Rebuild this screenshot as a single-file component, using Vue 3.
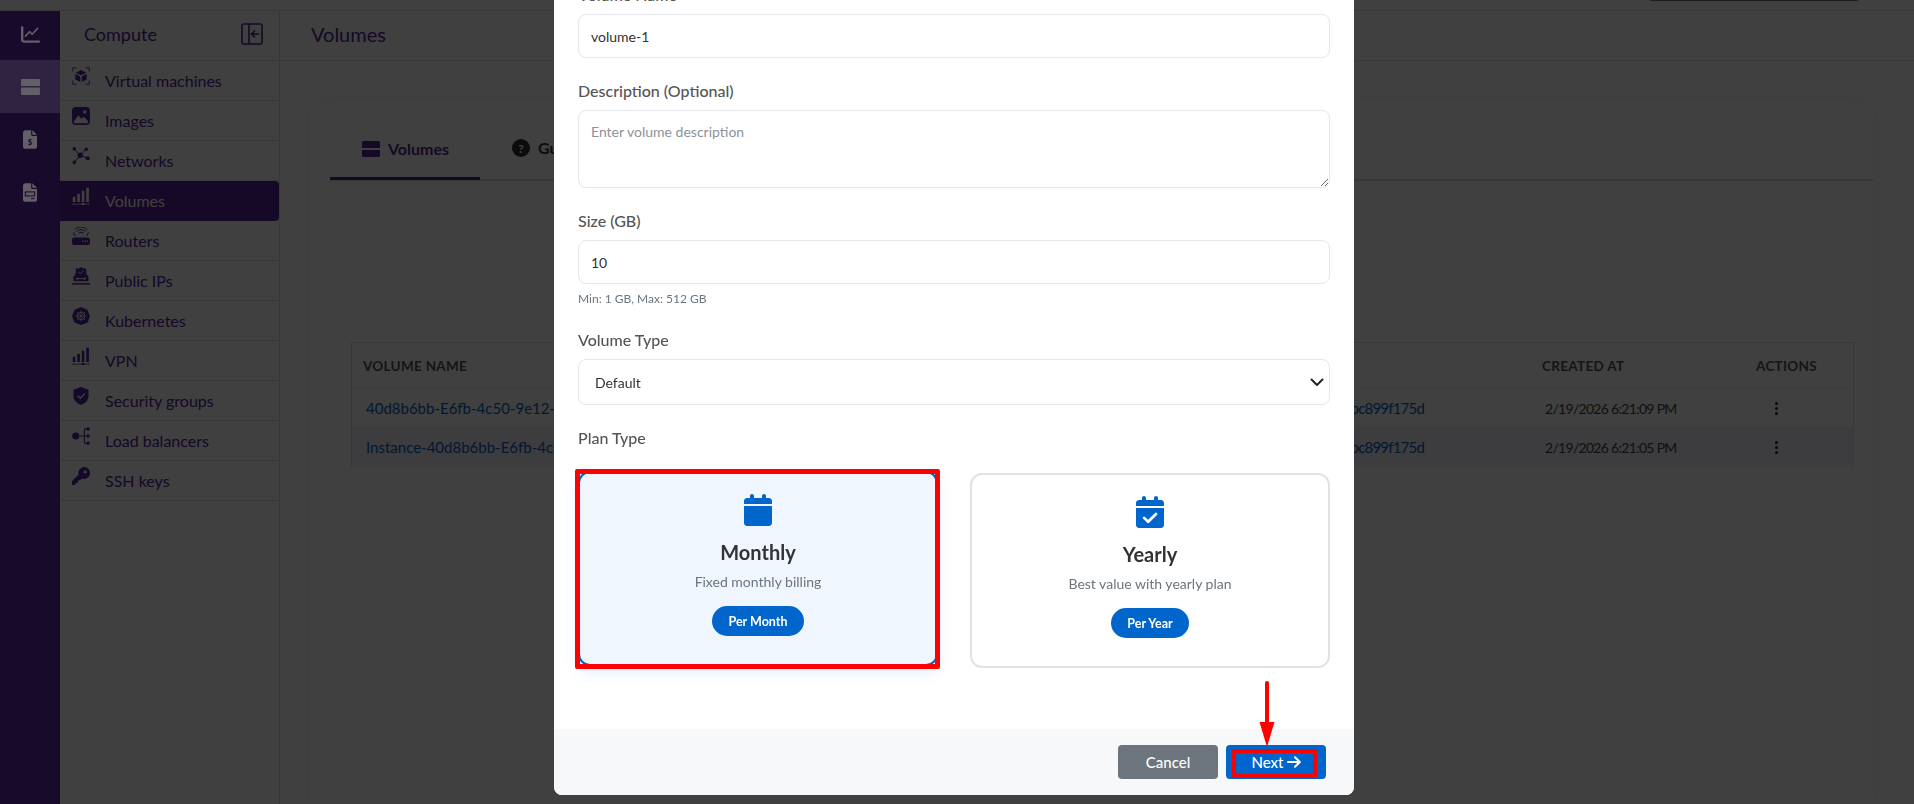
<template>
  <div class="page">
    <div class="topbar"><span class="top-tool"></span></div>

    <div class="shell">
      <aside class="rail">
        <div class="rail-item first">
          <svg viewBox="0 0 512 512" width="19" height="19" fill="currentColor"><path d="M64 64c0-17.7-14.3-32-32-32S0 46.300 0 64V400c0 44.200 35.800 80 80 80H480c17.700 0 32-14.300 32-32s-14.300-32-32-32H80c-8.800 0-16-7.200-16-16V64z"/><path d="M120 300l110-120 70 70L450 90" fill="none" stroke="currentColor" stroke-width="44" stroke-linecap="round" stroke-linejoin="round"/></svg>
        </div>
        <div class="rail-item active">
          <svg viewBox="0 0 18 18" width="19" height="19" fill="currentColor"><path d="M1 2h16a1 1 0 0 1 1 1v5.500H0V3a1 1 0 0 1 1-1zm0 8h16a1 1 0 0 1 1 1v5a1 1 0 0 1-1 1H1a1 1 0 0 1-1-1v-5a1 1 0 0 1 1-1z"/></svg>
        </div>
        <div class="rail-item">
          <svg viewBox="0 0 384 512" width="14" height="19" fill="currentColor"><path d="M64 0C28.700 0 0 28.700 0 64V448c0 35.300 28.700 64 64 64H320c35.300 0 64-28.700 64-64V160H256c-17.700 0-32-14.300-32-32V0H64zM256 0V128H384L256 0z"/><text x="192" y="400" text-anchor="middle" font-size="210" font-weight="700" font-family="Lato" fill="#170a2b">$</text></svg>
        </div>
        <div class="rail-item">
          <svg viewBox="0 0 384 512" width="14" height="19" fill="currentColor"><path d="M64 0C28.700 0 0 28.700 0 64V448c0 35.300 28.700 64 64 64H320c35.300 0 64-28.700 64-64V160H256c-17.700 0-32-14.300-32-32V0H64zM256 0V128H384L256 0z"/><rect x="64" y="240" width="256" height="110" fill="none" stroke="#170a2b" stroke-width="28"/><rect x="220" y="410" width="100" height="28" fill="#170a2b"/></svg>
        </div>
      </aside>

      <nav class="sidebar">
        <div class="side-head">
          <span>Compute</span>
          <svg viewBox="0 0 22 22" width="22" height="22" fill="none" stroke="currentColor" stroke-width="1.600"><rect x="1" y="1" width="20" height="20" rx="1.500"/><path d="M8 1v20M18 11h-7M14 7.500 10.500 11l3.500 3.500"/></svg>
        </div>
        <div v-for="item in navItems" :key="item.label" class="side-row" :class="{ current: item.label === 'Volumes' }">
          <svg class="side-icon" viewBox="0 0 24 24" width="18" height="18" fill="currentColor" v-html="icons[item.icon]"></svg>
          <span>{{ item.label }}</span>
        </div>
      </nav>

      <main class="main">
        <header class="main-head">Volumes</header>
        <div class="content">
          <section class="card">
            <div class="tabs">
              <div class="tab selected">
                <svg viewBox="0 0 18 18" width="18" height="18" fill="currentColor"><path d="M1.500 1h15A1.500 1.500 0 0 1 18 2.500V8H0V2.500A1.500 1.500 0 0 1 1.500 1zM0 10h18v5.500a1.500 1.500 0 0 1-1.500 1.500h-15A1.500 1.500 0 0 1 0 15.500z"/></svg>
                Volumes
              </div>
              <div class="tab">
                <svg viewBox="0 0 18 18" width="18" height="18"><circle cx="9" cy="9" r="9" fill="currentColor"/><text x="9" y="13.500" text-anchor="middle" font-size="12" font-weight="700" font-family="Lato" fill="#fff">?</text></svg>
                Guide
              </div>
            </div>

            <div class="table">
              <div class="tr th">
                <div>VOLUME NAME</div>
                <div class="id-head">ATTACHED TO</div>
                <div class="date-col">CREATED AT</div>
                <div>ACTIONS</div>
              </div>
              <div v-for="row in volumes" :key="row.name" class="tr" :class="{ tinted: row.tinted }">
                <div class="link name-col">{{ row.name }}</div>
                <div class="link id-col">{{ row.id }}</div>
                <div class="date-col date">{{ row.created }}</div>
                <div class="kebab"><i></i><i></i><i></i></div>
              </div>
            </div>
          </section>
        </div>
      </main>
    </div>

    <div class="backdrop"></div>

    <div class="modal-wrap">
      <div class="modal">
        <div class="modal-body">
          <label class="lbl">Volume Name</label>
          <input class="ctl" type="text" value="volume-1" />

          <label class="lbl">Description (Optional)</label>
          <textarea class="ctl area" placeholder="Enter volume description"></textarea>

          <label class="lbl">Size (GB)</label>
          <input class="ctl" type="text" value="10" />
          <div class="hint">Min: 1 GB, Max: 512 GB</div>

          <label class="lbl">Volume Type</label>
          <div class="select-box">
            <select class="ctl sel"><option>Default</option></select>
            <svg class="chev" viewBox="0 0 14 9" width="14" height="9" fill="none" stroke="#212529" stroke-width="2" stroke-linecap="round" stroke-linejoin="round"><path d="M1.500 1.500 7 7l5.500-5.500"/></svg>
          </div>

          <label class="lbl plan-lbl">Plan Type</label>
          <div class="plans">
            <div v-for="plan in plans" :key="plan.title" class="plan" :class="{ picked: plan.picked }">
              <svg class="plan-icon" viewBox="0 0 448 512" width="28" height="32" fill="#0066cc">
                <path d="M96 32V64H48C21.500 64 0 85.500 0 112v48H448V112c0-26.500-21.500-48-48-48H352V32c0-17.700-14.300-32-32-32s-32 14.300-32 32V64H160V32c0-17.700-14.300-32-32-32S96 14.300 96 32zM448 192H0V464c0 26.500 21.500 48 48 48H400c26.500 0 48-21.500 48-48V192z"/>
                <path v-if="!plan.picked" d="M130 350l65 62 125-125" fill="none" stroke="#fff" stroke-width="44" stroke-linecap="round" stroke-linejoin="round"/>
              </svg>
              <div class="plan-title">{{ plan.title }}</div>
              <div class="plan-sub">{{ plan.sub }}</div>
              <span class="pill">{{ plan.pill }}</span>
              <span v-if="plan.picked" class="mark mark-plan"></span>
            </div>
          </div>
        </div>

        <footer class="modal-foot">
          <button class="btn cancel">Cancel</button>
          <button class="btn next">
            Next
            <svg viewBox="0 0 14 12" width="14" height="12" fill="none" stroke="#fff" stroke-width="2" stroke-linecap="round" stroke-linejoin="round"><path d="M1 6h11.500M8 1.200 12.800 6 8 10.800"/></svg>
            <span class="mark mark-next"></span>
            <svg class="pointer" viewBox="0 0 16 66" width="16" height="66" fill="#f00"><rect x="6" y="0" width="4" height="44" rx="2"/><path d="M0.500 41h15L8 66z"/></svg>
          </button>
        </footer>
      </div>
    </div>
  </div>
</template>

<script setup>
const navItems = [
  { label: 'Virtual machines', icon: 'vm' },
  { label: 'Images', icon: 'image' },
  { label: 'Networks', icon: 'network' },
  { label: 'Volumes', icon: 'bars' },
  { label: 'Routers', icon: 'router' },
  { label: 'Public IPs', icon: 'publicip' },
  { label: 'Kubernetes', icon: 'k8s' },
  { label: 'VPN', icon: 'bars' },
  { label: 'Security groups', icon: 'shield' },
  { label: 'Load balancers', icon: 'balancer' },
  { label: 'SSH keys', icon: 'key' }
]

const icons = {
  vm: '<path d="M1 6V1h5M18 1h5v5M23 18v5h-5M6 23H1v-5" fill="none" stroke="currentColor" stroke-width="1.200"/><path d="M12 4l7 3.500L12 11 5 7.500zM4.500 9l6.500 3.500V20l-6.500-3.500zM19.500 9v7.500L13 20v-7.500z"/>',
  image: '<path d="M5 0h14a5 5 0 0 1 5 5v14a5 5 0 0 1-5 5H5a5 5 0 0 1-5-5V5a5 5 0 0 1 5-5z"/><path d="M2.500 19l6-8 4 5 3-3 6 6v.500a2 2 0 0 1-2 2h-15a2 2 0 0 1-2-2z" fill="#fff"/><circle cx="17" cy="6.500" r="2.200" fill="#fff"/>',
  network: '<circle cx="11" cy="11" r="3.600"/><circle cx="19" cy="3" r="2.400"/><circle cx="3" cy="2.500" r="2.400"/><circle cx="3" cy="20.500" r="2.400"/><circle cx="21" cy="15" r="2.800"/><path d="M3 2.500l8 8.500 8-8M3 20.500 11 11l10 4" fill="none" stroke="currentColor" stroke-width="1.300"/>',
  bars: '<rect x="1" y="13" width="3.500" height="7"/><rect x="7" y="9" width="3.500" height="11"/><rect x="13" y="5" width="3.500" height="15"/><rect x="19" y="1" width="3.500" height="19"/><rect x="0" y="22.300" width="24" height="1"/><rect x="13" y="21" width="3.500" height="3.500" rx="1"/>',
  router: '<path d="M3 14h18a3 3 0 0 1 3 3v4a3 3 0 0 1-3 3H3a3 3 0 0 1-3-3v-4a3 3 0 0 1 3-3z"/><path d="M6 6a8.500 8.500 0 0 1 12 0M8.500 8.500a5 5 0 0 1 7 0M3.500 3.500a12 12 0 0 1 17 0M2 7l2 5M22 7l-2 5" fill="none" stroke="currentColor" stroke-width="1.300"/><rect x="14" y="18" width="1.500" height="2" fill="#fff"/><rect x="17" y="18" width="1.500" height="2" fill="#fff"/><rect x="20" y="18" width="1.500" height="2" fill="#fff"/>',
  publicip: '<path d="M12 0l3 2h4v7l3 4v6H2v-6l3-4V2h4z"/><path d="M8.500 6.500 11 9l4.500-4.500M6 15.500h12" fill="none" stroke="#fff" stroke-width="1.300"/><circle cx="7" cy="15.500" r="1.400" fill="#fff"/><circle cx="17" cy="15.500" r="1.400" fill="#fff"/><rect x="0" y="21.500" width="24" height="2"/>',
  k8s: '<path d="M12 0l8.500 3.500L24 12l-3 8.500L12 24l-9-3.500L0 12l3.500-8.500z"/><circle cx="12" cy="12" r="5" fill="none" stroke="#fff" stroke-width="1.200"/><path d="M12 4.500v15M4.500 12h15M6.700 6.700l10.600 10.600M17.300 6.700 6.700 17.300" stroke="#fff" stroke-width=".9"/>',
  shield: '<path d="M12 0l10 3.500v8.500c0 6-4.500 10-10 12C6.500 22 2 18 2 12V3.500z"/><path d="M8 12l3 3 5.500-5.500" fill="none" stroke="#fff" stroke-width="1.800" stroke-linecap="round" stroke-linejoin="round"/>',
  balancer: '<circle cx="5" cy="12" r="4.800"/><circle cx="21.500" cy="2.500" r="2.300"/><circle cx="21.500" cy="12" r="2.300"/><circle cx="21.500" cy="21.500" r="2.300"/><path d="M10 12h9M16.500 2.500h4M16.500 2.500v19M16.500 21.500h4" fill="none" stroke="currentColor" stroke-width="1.400"/>',
  key: '<path d="M16 0a8 8 0 1 1-3 15.400L11 17.500H8V21H4.500v3H0v-5l8.800-9A8 8 0 0 1 16 0z"/><circle cx="17.500" cy="6.500" r="2.200" fill="#fff"/>'
}

const volumes = [
  { name: '40d8b6bb-E6fb-4c50-9e12-4a7f0c3bd1e2', id: '40d8b6bb-e6fb-4c50-9e12-4dbc899f175d', created: '2/19/2026 6:21:09 PM' },
  { name: 'Instance-40d8b6bb-E6fb-4c50-9e12', id: '40d8b6bb-e6fb-4c50-9e12-4dbc899f175d', created: '2/19/2026 6:21:05 PM', tinted: true }
]

const plans = [
  { title: 'Monthly', sub: 'Fixed monthly billing', pill: 'Per Month', picked: true },
  { title: 'Yearly', sub: 'Best value with yearly plan', pill: 'Per Year', picked: false }
]
</script>

<style>
html, body {
  margin: 0;
  height: 100%;
  overflow: hidden;
  background: #fff;
}
</style>

<style scoped>
.page {
  height: 804px;
  overflow: hidden;
  font-family: "Lato", "Noto Sans", sans-serif;
  color: #54249a;
}

.topbar {
  height: 10px;
  border-bottom: 1px solid #ddd;
  display: flex;
  justify-content: flex-end;
}

.top-tool {
  width: 208px;
  height: 1px;
  margin-right: 56px;
  background: #777;
}

.shell {
  display: flex;
  height: 793px;
}

.rail {
  width: 60px;
  flex: none;
  background: #170a2b;
  color: #625f68;
  position: relative;
  z-index: 20;
}

.rail-item {
  height: 53px;
  display: flex;
  align-items: center;
  justify-content: center;
}

.rail-item.first {
  height: 49px;
  padding-bottom: 3px;
  box-sizing: border-box;
}

.rail-item.active {
  background: #302341;
}

.sidebar {
  width: 219px;
  flex: none;
  border-right: 1px solid #ddd;
}

.side-head {
  height: 50px;
  box-sizing: border-box;
  padding: 0 16px 3px 24px;
  display: flex;
  align-items: center;
  justify-content: space-between;
  font-size: 18px;
  border-bottom: 1px solid #e4e4e4;
}

.side-row {
  height: 40px;
  box-sizing: border-box;
  padding: 6px 0 0 12px;
  display: flex;
  align-items: flex-start;
  gap: 15px;
  font-size: 16px;
  line-height: 22px;
  border-bottom: 1px solid #e4e4e4;
}

.side-row span {
  padding-top: 3px;
}

.side-row.current {
  background: #54249a;
  color: #fff;
  border-radius: 0 4px 4px 0;
  border-bottom-color: transparent;
}

.side-icon {
  flex: none;
}

.main {
  flex: 1;
  min-width: 0;
}

.main-head {
  height: 50px;
  box-sizing: border-box;
  padding: 0 0 3px 31px;
  display: flex;
  align-items: center;
  font-size: 20px;
  border-bottom: 1px solid #e4e4e4;
}

.content {
  padding: 39px 39px 0 30px;
}

.card {
  height: 690px;
  padding: 22px 2px 0 20px;
  box-shadow: 0 0 20px rgba(0, 0, 0, 0.03);
}

.tabs {
  display: flex;
  box-sizing: border-box;
  border-bottom: 2px solid #dcdcdc;
  height: 59px;
}

.tab {
  padding: 0 31px 6px 32px;
  display: flex;
  align-items: center;
  gap: 8px;
  font-size: 16px;
  font-weight: 700;
  color: #333;
}

.tab.selected {
  color: #54249a;
  border-bottom: 3px solid #54249a;
  margin-bottom: -1px;
  padding-bottom: 2px;
}

.table {
  margin: 161px 19px 0 21px;
  border: 1px solid #dedede;
  border-bottom: 0;
}

.tr {
  display: grid;
  grid-template-columns: 300px 772px 332px 97px;
  height: 39px;
  align-items: center;
  font-size: 15px;
  border-bottom: 1px solid #ededed;
  box-sizing: border-box;
}

.th {
  height: 46px;
  font-size: 13.5px;
  font-weight: 700;
  letter-spacing: 0.3px;
  color: #555;
}

.th > div:first-child {
  padding-left: 11px;
}

.name-col {
  padding-left: 14px;
  white-space: nowrap;
}

.id-col {
  text-align: right;
  letter-spacing: -0.8px;
}

.date-col {
  padding-left: 118px;
}

.date {
  padding-left: 121px;
  font-size: 14px;
  letter-spacing: -0.7px;
  color: #444;
}

.link {
  color: #0862c0;
}

.tinted {
  background: #f4effb;
}

.kebab {
  display: flex;
  flex-direction: column;
  gap: 2px;
  padding-left: 19px;
}

.kebab i {
  width: 3px;
  height: 3px;
  border-radius: 50%;
  background: #222;
}

.backdrop {
  position: fixed;
  inset: 0;
  z-index: 10;
  background: rgba(0, 0, 0, 0.75);
}

.modal-wrap {
  position: fixed;
  inset: 0;
  z-index: 30;
  display: flex;
  justify-content: center;
  overflow: hidden;
}

.modal {
  width: 800px;
  height: 835px;
  margin: -40px 0 0 -6px;
  background: #fff;
  border-radius: 8px;
  display: flex;
  flex-direction: column;
  color: #333;
}

.modal-body {
  flex: 1;
  padding: 23px 24px 0;
}

.lbl {
  display: block;
  font-size: 16px;
  line-height: 24px;
  margin-bottom: 7px;
  font-weight: 500;
  color: #555;
}

.ctl {
  display: block;
  width: 100%;
  height: 44px;
  box-sizing: border-box;
  padding: 0 12px;
  border: 1.5px solid #e4e6ec;
  border-radius: 8px;
  background: #fff;
  font-family: inherit;
  font-size: 14px;
  color: #333;
  outline: none;
  margin-bottom: 21px;
}

.area {
  height: 78px;
  padding-top: 12px;
}

.area::placeholder {
  color: #8b929a;
}

.hint {
  font-size: 12px;
  line-height: 16px;
  color: #6c757d;
  margin: -14px 0 21px;
}

.select-box {
  position: relative;
}

.sel {
  height: 46px;
  appearance: none;
  padding-left: 16px;
  margin-bottom: 21px;
}

.chev {
  position: absolute;
  right: 6px;
  top: 19px;
}

.plan-lbl {
  margin-bottom: 23px;
}

.plans {
  display: grid;
  grid-template-columns: 360px 360px;
  gap: 32px;
}

.plan {
  position: relative;
  height: 195px;
  box-sizing: border-box;
  padding-top: 21px;
  border: 2px solid #e2e2e2;
  border-radius: 12px;
  background: #fff;
  display: flex;
  flex-direction: column;
  align-items: center;
}

.plan.picked {
  border-color: #0066cc;
  background: #eff6ff;
  transform: translateY(-2px);
  box-shadow: 0 6px 16px rgba(0, 102, 204, 0.12);
}

.plan-title {
  margin-top: 11px;
  font-size: 20px;
  line-height: 30px;
  font-weight: 700;
  color: #333;
}

.plan-sub {
  margin-top: 5px;
  font-size: 14px;
  line-height: 20px;
  color: #6c757d;
}

.pill {
  margin-top: 14px;
  height: 30px;
  padding: 0 16px;
  border-radius: 15px;
  background: #0066cc;
  color: #fff;
  font-size: 12.5px;
  font-weight: 700;
  display: flex;
  align-items: center;
}

.mark {
  position: absolute;
  box-sizing: border-box;
  border-style: solid;
  border-color: #f00;
  border-radius: 2px;
}

.mark-plan {
  top: -4px;
  left: -5px;
  right: -4px;
  bottom: -5px;
  border-width: 5px;
}

.modal-foot {
  height: 66px;
  flex: none;
  box-sizing: border-box;
  padding: 16px 28px 16px 0;
  background: #f6f8fa;
  border-radius: 0 0 8px 8px;
  display: flex;
  justify-content: flex-end;
  gap: 8px;
}

.btn {
  position: relative;
  width: 100px;
  height: 34px;
  border: 0;
  border-radius: 4px;
  color: #fff;
  font-family: inherit;
  font-size: 15px;
  font-weight: 500;
  display: flex;
  align-items: center;
  justify-content: center;
  gap: 3px;
}

.cancel {
  background: #6c757d;
}

.next {
  background: #0066cc;
}

.mark-next {
  top: 4px;
  left: 6px;
  right: 9px;
  bottom: 1px;
  border-width: 4px;
}

.pointer {
  position: absolute;
  left: 33px;
  top: -64px;
}
</style>
